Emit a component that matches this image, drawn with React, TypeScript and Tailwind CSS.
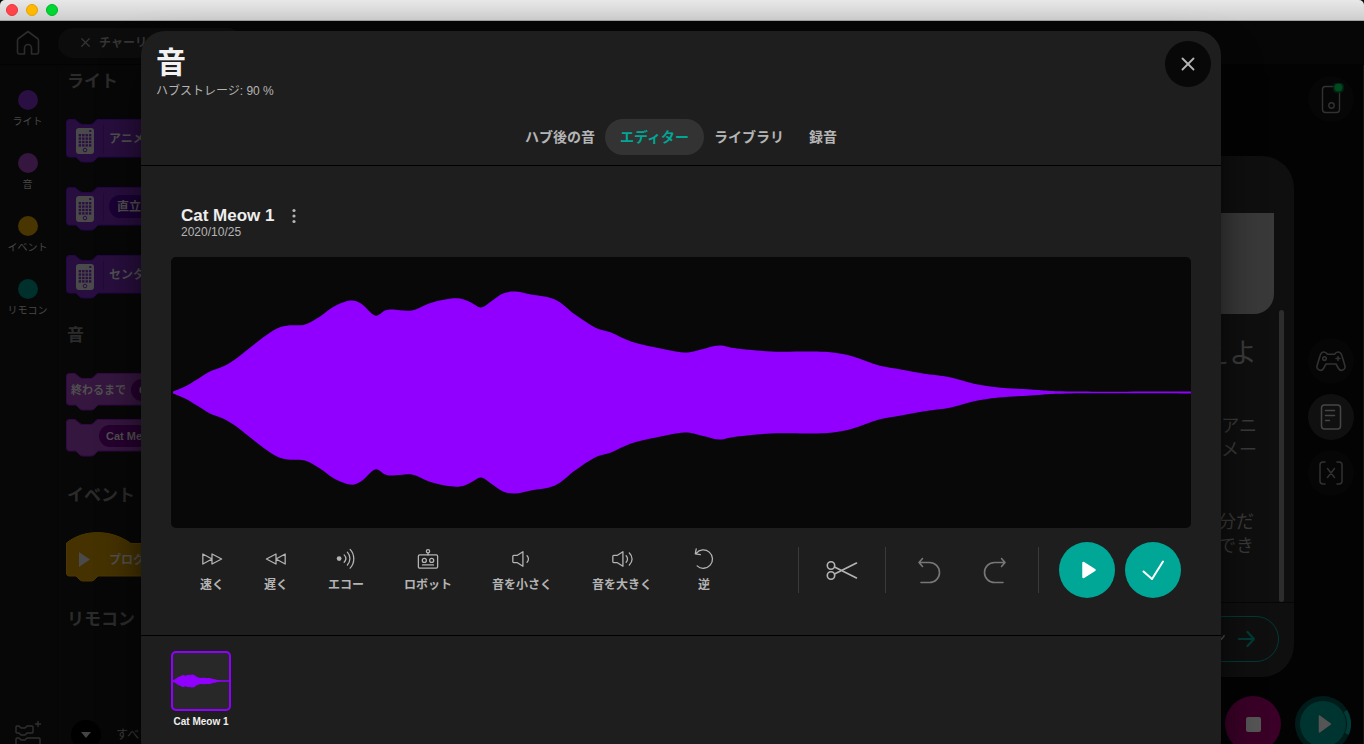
import type { ReactNode } from "react";
import { X } from "lucide-react";

const WAVE: [number, number][] = [
  [2, 1], [14, 6], [26, 13], [39, 21], [52, 26], [64, 33], [78, 44], [92, 55], [106, 64], [117, 67],
  [134, 68], [149, 76], [163, 86], [179, 92], [190, 89], [204, 77], [214, 82], [222, 83], [241, 82],
  [258, 89], [274, 93], [289, 94], [300, 90], [310, 85], [320, 91], [332, 99], [344, 101], [360, 98],
  [384, 93], [404, 78], [424, 65], [440, 60], [460, 51], [485, 45], [513, 40], [530, 43], [548, 47],
  [566, 44], [600, 41], [640, 41], [662, 40], [682, 36], [708, 27], [730, 23], [752, 19], [780, 15],
  [802, 9], [828, 5], [860, 3], [900, 1], [1020, 1],
];

function smooth(points: [number, number][]) {
  let d = "";
  for (let i = 0; i < points.length - 1; i++) {
    const a = points[Math.max(0, i - 1)];
    const b = points[i];
    const c = points[i + 1];
    const e = points[Math.min(points.length - 1, i + 2)];
    d += ` C${b[0] + (c[0] - a[0]) / 6} ${b[1] + (c[1] - a[1]) / 6} ${c[0] - (e[0] - b[0]) / 6} ${c[1] - (e[1] - b[1]) / 6} ${c[0]} ${c[1]}`;
  }
  return d;
}

const TOP = WAVE.map(([x, y]) => [x, 135.5 - y] as [number, number]);
const BOTTOM = WAVE.map(([x, y]) => [x, 135.5 + y] as [number, number]).reverse();
const WAVE_PATH = `M2 134.5${smooth(TOP)} L1020 136.5${smooth(BOTTOM)} Z`;

function Wave({ className, outline }: { className: string; outline?: boolean }) {
  return (
    <svg viewBox="0 0 1020 271" preserveAspectRatio="none" className={className} aria-hidden="true">
      <path d={WAVE_PATH} fill="#9100ff" stroke={outline ? "#9100ff" : "none"} strokeWidth="1.2" vectorEffect="non-scaling-stroke" />
    </svg>
  );
}

function Icon({ children, className, box = "0 0 24 24" }: { children: ReactNode; className: string; box?: string }) {
  return (
    <svg viewBox={box} fill="none" stroke="currentColor" strokeWidth="1.4" strokeLinecap="round" strokeLinejoin="round" className={className} aria-hidden="true">
      {children}
    </svg>
  );
}

const SPEAKER = <path d="M3 8h4l6-4v16l-6-4H3c-.6 0-1-.4-1-1v-6c0-.6.4-1 1-1Z" />;

const TOOLS: { label: string; icon: ReactNode }[] = [
  { label: "速く", icon: <path d="M2 6.500v11l10-5.500ZM12 6.500v11L22.500 12Z" /> },
  { label: "遅く", icon: <path d="M22 6.500v11L12 12ZM12 6.500v11L1.500 12Z" /> },
  {
    label: "エコー",
    icon: (
      <>
        <circle cx="4.500" cy="11.500" r="2.600" fill="currentColor" stroke="none" />
        <path d="M10 7.500c2.200 2.400 2.200 5.600 0 8M13.500 4.500c3.700 4 3.700 10 0 14M16.500 1.500c5.300 5.500 5.300 15 0 20.500" />
      </>
    ),
  },
  {
    label: "ロボット",
    icon: (
      <>
        <rect x="1.500" y="7.500" width="21" height="14.500" rx="1.500" />
        <circle cx="12" cy="3.500" r="1.800" />
        <path d="M12 5.500V7.500M6 18.500h12" />
        <circle cx="8" cy="13.500" r="2.200" />
        <circle cx="16" cy="13.500" r="2.200" />
      </>
    ),
  },
  { label: "音を小さく", icon: <>{SPEAKER}<path d="M17.500 8.500c2 2 2 5 0 7" /></> },
  { label: "音を大きく", icon: <>{SPEAKER}<path d="M16.500 8.500c2 2 2 5 0 7M20 5.500c4 3.600 4 9.400 0 13" /></> },
  { label: "逆", icon: <path d="M3.500 5.800A10 10 0 1 1 4.500 19.500M3.500 1l-1 5.500 5.500.8" /> },
];

const CATEGORIES = [
  { label: "ライト", color: "bg-[#2a0f42]" },
  { label: "音", color: "bg-[#35163f]" },
  { label: "イベント", color: "bg-[#493500]" },
  { label: "リモコン", color: "bg-[#00302c]" },
];

const NOTCH_TOP = "M.5 3Q.5.5 3 .5H9L14 4.500Q15 5.500 17 5.500H24Q26 5.500 27 4.500L31 .5H220";

function Block({ tall, fill, stroke, children }: { tall?: boolean; fill: string; stroke: string; children?: ReactNode }) {
  const h = tall ? 38 : 32;
  return (
    <div className="grid shrink-0">
      <svg width="220" height={h + 6} className="[grid-area:1/1]" aria-hidden="true">
        <path d={`${NOTCH_TOP}V${h}H32L28 ${h + 4}Q27 ${h + 5} 25 ${h + 5}H17Q15 ${h + 5} 14 ${h + 4}L10 ${h}H3Q.5 ${h} .5 ${h - 3}Z`} fill={fill} stroke={stroke} />
      </svg>
      <div className={tall ? "[grid-area:1/1] flex items-center h-[39px] pl-[10px] text-[12px] font-semibold text-[#505050]" : "[grid-area:1/1] flex items-center h-[34px] pl-[5px] text-[11px] font-semibold text-[#505050]"}>
        {children}
      </div>
    </div>
  );
}

function HubIcon() {
  return (
    <svg width="18" height="27" viewBox="0 0 18 27" className="mt-[5px] shrink-0" aria-hidden="true">
      <rect x="0" y="0" width="18" height="26" rx="3" fill="#4a4a4a" />
      <rect x="13" y="2" width="2.500" height="2" rx="1" fill="#2a0f42" />
      {[0, 1, 2, 3].map((c) =>
        [0, 1, 2, 3].map((r) => <rect key={`${c}${r}`} x={2.700 + c * 3.400} y={6 + r * 3.400} width="2.400" height="2.400" fill="#2a0f42" />)
      )}
      <circle cx="9" cy="22" r="1.800" fill="none" stroke="#2a0f42" />
    </svg>
  );
}

function Heading({ children, className }: { children: ReactNode; className: string }) {
  return <h2 className={`shrink-0 pl-[1px] text-[17px] leading-5 font-bold text-[#2b2b2b] ${className}`}>{children}</h2>;
}

function Workspace() {
  return (
    <div className="flex h-full flex-col bg-[#030303]">
      <header className="flex h-11 shrink-0 items-center border-b border-[#030303] bg-[#060606]">
        <button aria-label="ホーム" className="flex w-14 justify-center text-[#2c2c2c]">
          <Icon box="0 0 24 26" className="h-[26px] w-6">
            <path strokeWidth="1.600" d="M12 1.500 2.500 8.500Q1.500 9.200 1.500 10.500V22q0 2 2 2h5v-6a3.500 3.500 0 0 1 7 0v6h5q2 0 2-2V10.500q0-1.300-1-2Z" />
          </Icon>
        </button>
        <button className="ml-[2px] flex h-[30px] w-[184px] items-center gap-[6px] rounded-full bg-[#0c0c0c] pl-5 text-[12px] font-semibold text-[#353535]">
          <X size={15} strokeWidth={2} aria-hidden="true" />
          チャーリ
        </button>
      </header>

      <div className="flex min-h-0 flex-1">
        <nav className="flex w-[57px] shrink-0 flex-col justify-between bg-[#070707] pr-[2px]">
          <ul className="flex flex-col gap-6 pt-[25px]">
            {CATEGORIES.map((c) => (
              <li key={c.label}>
                <button className="flex w-full flex-col items-center gap-[5px] text-[10px] leading-[14px] whitespace-nowrap text-[#484848]">
                  <span className={`size-5 rounded-full ${c.color}`} />
                  {c.label}
                </button>
              </li>
            ))}
          </ul>
          <button aria-label="拡張を追加" className="-mb-2 flex justify-center text-[#303030]">
            <Icon box="0 0 28 32" className="h-8 w-7">
              <path strokeWidth="1.400" d="M3 6h2l2 2h4l2-2h5q1 0 1 1v5q0 1-1 1h-5l-2 2H7l-2-2H3q-1 0-1-1V7q0-1 1-1ZM3 18h2l2 2h4l2-2h12q1 0 1 1v7H2v-7q0-1 1-1ZM24 1.500v5M21.500 4h5" />
            </Icon>
          </button>
        </nav>

        <section className="flex w-[260px] shrink-0 flex-col overflow-hidden border-l border-[#050505] bg-[#070707] pl-2">
          <Heading className="mt-[7px]">ライト</Heading>
          <div className="mt-[27px] flex flex-col gap-6">
            <Block tall fill="#280e3e" stroke="#22064a">
              <HubIcon /><span className="mr-[5px] ml-[9px] h-7 w-px bg-[#220a36]" />アニメ
            </Block>
            <Block tall fill="#280e3e" stroke="#22064a">
              <HubIcon /><span className="mr-[5px] ml-[9px] h-7 w-px bg-[#220a36]" />
              <span className="flex h-[23px] items-center rounded-full bg-[#1b0036] px-2">直立</span>
            </Block>
            <Block tall fill="#280e3e" stroke="#22064a">
              <HubIcon /><span className="mr-[5px] ml-[9px] h-7 w-px bg-[#220a36]" />センタ
            </Block>
          </div>
          <Heading className="mt-[27px]">音</Heading>
          <div className="mt-[27px] flex flex-col gap-2">
            <Block fill="#35163f" stroke="#340746">
              終わるまで
              <span className="ml-[5px] flex h-[22px] items-center rounded-full bg-[#26002f] px-2">C</span>
            </Block>
            <Block fill="#35163f" stroke="#340746">
              <span className="ml-7 flex h-[22px] items-center rounded-full bg-[#26002f] px-[7px] font-bold">Cat Me</span>
            </Block>
          </div>
          <Heading className="mt-[29px]">イベント</Heading>
          <div className="mt-[26px] grid shrink-0">
            <svg width="220" height="50" className="[grid-area:1/1]" aria-hidden="true">
              <path d="M.5 11C18-3 45-3 65 11.500H220V44H32L28 48Q27 49 25 49H17Q15 49 14 48L10 44H3Q.5 44 .5 41Z" fill="#453200" stroke="#4d3700" />
              <path d="M13 20v15l11-7.500Z" fill="#4a4a4a" />
            </svg>
            <div className="[grid-area:1/1] flex h-[50px] items-center pt-[6px] pl-[43px] text-[12px] font-semibold text-[#505050]">プログ</div>
          </div>
          <Heading className="mt-[28px]">リモコン</Heading>
          <div className="mt-auto -mb-[6px] flex items-center gap-[15px] pl-[5px] text-[12px] text-[#3c3c3c]">
            <button aria-label="開く" className="flex size-[30px] items-center justify-center rounded-full bg-black">
              <svg width="12" height="6" aria-hidden="true"><path d="M1 0h10L6 6Z" fill="#444" /></svg>
            </button>
            すべ
          </div>
        </section>

        <main className="flex min-w-0 flex-1 flex-col justify-between border-r border-[#151515]">
          <div className="flex justify-end gap-[14px] pr-[9px]">
            <article className="mt-[91px] flex h-[521px] w-[340px] flex-col rounded-[32px] bg-[#0f0f0f] pt-[57px] text-right">
              <div className="mr-5 h-[101px] shrink-0 rounded-br-[20px] bg-[#393939]" />
              <div className="-mt-1 flex h-[293px] shrink-0 border-b border-[#060606] text-[18px] leading-6 text-[#3a3a3a]">
                <div className="mr-[22px] flex-1">
                  <h2 className="mt-6 text-[28px] leading-10">えよ</h2>
                  <p className="mt-10">アニ<br />メー</p>
                  <p className="mt-12 pr-[3px]">分だ<br />でき</p>
                </div>
                <div className="mr-[10px] w-[5px] rounded-full bg-[#2d2d2d]" />
              </div>
              <button className="mt-[13px] mr-[15px] ml-6 flex h-[46px] items-center justify-end gap-3 rounded-full border border-[#003b36] pr-[22px] text-[16px] text-[#555]">
                ン
                <Icon className="h-5 w-[18px] text-[#003b36]" box="0 0 18 20"><path strokeWidth="2.200" d="M1 10h15M9.500 3 16 10l-6.500 7" /></Icon>
              </button>
            </article>
            <aside className="flex flex-col items-center gap-[10px] pt-[11px] text-[#323232]">
              <button aria-label="ハブ接続" className="mb-[206px] flex size-[46px] items-center justify-center rounded-full bg-[#060606]">
                <Icon box="0 0 26 32" className="h-8 w-[26px]">
                  <rect x="4.500" y="3.500" width="17" height="26" rx="3" strokeWidth="1.400" />
                  <circle cx="13.500" cy="22.500" r="2.700" strokeWidth="1.400" />
                  <circle cx="17.500" cy="7.500" r="1.200" strokeWidth="1" />
                  <circle cx="20.500" cy="4.500" r="6" fill="#00240f" fillOpacity=".8" stroke="none" />
                  <circle cx="20.500" cy="4.500" r="4" fill="#004a22" stroke="none" />
                </Icon>
              </button>
              <button aria-label="コントローラー" className="flex size-[46px] items-center justify-center rounded-full bg-[#060606]">
                <Icon box="0 0 30 22" className="h-[22px] w-[30px]">
                  <path strokeWidth="1.600" d="M8 2C5 2 4.500 4 4 6L1 16c-.8 4 4.500 6 6.500 2.500L10 14h10l2.500 4.500C24.500 22 29.800 20 29 16L26 6c-.5-2-1-4-4-4-1.500 0-2.500.7-3.500 2.200h-7C10.500 2.700 9.500 2 8 2Z" />
                  <circle cx="8.500" cy="8.500" r="1.800" strokeWidth="1.500" /><path strokeWidth="1.500" d="M22 6.500v4M20 8.500h4" />
                </Icon>
              </button>
              <button aria-label="レッスン" className="flex size-[46px] items-center justify-center rounded-full bg-[#101010] text-[#454545]">
                <Icon box="0 0 22 26" className="h-[26px] w-[22px]">
                  <rect x="1.500" y="1" width="19" height="24" rx="3" strokeWidth="1.500" />
                  <path strokeWidth="1.500" d="M5.500 6.500h9M5.500 11.500h9M5.500 16.500h4" />
                </Icon>
              </button>
              <button aria-label="変数" className="flex size-[46px] items-center justify-center rounded-full bg-[#060606]">
                <Icon box="0 0 24 24" className="size-6">
                  <path strokeWidth="1.500" d="M6 1H4Q1 1 1 4v16q0 3 3 3h2M18 1h2q3 0 3 3v16q0 3-3 3h-2M8.500 7.500l7 9M15.500 7.500l-7 9" />
                </Icon>
              </button>
            </aside>
          </div>
          <div className="-mb-2 flex shrink-0 justify-end gap-[14px] pr-3">
            <button aria-label="停止" className="flex size-14 items-center justify-center rounded-full bg-[#3a0027]">
              <span className="size-[15px] rounded-[2px] bg-[#555]" />
            </button>
            <button aria-label="実行" className="rounded-full">
              <svg width="56" height="56" aria-hidden="true">
                <circle cx="28" cy="28" r="28" fill="#001c1a" />
                <circle cx="28" cy="28" r="23" fill="#003430" />
                <path d="M50.500 15A26 26 0 0 1 52 38" fill="none" stroke="#003b36" strokeWidth="4" />
                <path d="M24.500 20v16l11-8Z" fill="#555" stroke="#555" strokeWidth="1.500" strokeLinejoin="round" />
              </svg>
            </button>
          </div>
        </main>
      </div>
    </div>
  );
}

const TABS = ["ハブ後の音", "エディター", "ライブラリ", "録音"];

function SoundDialog() {
  return (
    <div role="dialog" aria-label="音" className="absolute top-[10px] right-[2px] -bottom-5 left-0 mx-auto flex max-w-[1080px] flex-col rounded-[24px] bg-[#1e1e1e] shadow-2xl shadow-black">
      <header className="border-b border-black pb-[10px]">
        <div className="flex h-[88px] justify-between pt-[10px] pr-[10px] pl-[15px]">
          <div>
            <h1 className="text-[30px] leading-[43px] font-bold text-[#f2f2f2]">音</h1>
            <p className="text-[12px] leading-[15px] text-[#b4b4b4]">ハブストレージ: 90 %</p>
          </div>
          <button aria-label="閉じる" className="flex size-[46px] items-center justify-center rounded-full bg-[#080808] text-[#b4b4b4]">
            <X size={22} strokeWidth={2} aria-hidden="true" />
          </button>
        </div>
        <nav className="flex justify-center -space-x-[5px]">
          {TABS.map((t) => (
            <button key={t} className={t === "エディター" ? "h-9 rounded-full bg-[#333] px-[15px] text-[14px] font-bold text-[#00a696]" : "h-9 px-[15px] text-[14px] font-bold text-[#b4b4b4]"}>
              {t}
            </button>
          ))}
        </nav>
      </header>

      <section className="border-b border-black px-[30px] pt-10 pb-[37px]">
        <div className="px-[10px] pb-[18px]">
          <div className="flex items-center gap-4">
            <h2 className="text-[17px] leading-5 font-bold text-[#eee]">Cat Meow 1</h2>
            <button aria-label="メニュー" className="text-[#b4b4b4]">
              <svg width="6" height="16" fill="currentColor" aria-hidden="true"><circle cx="3" cy="2.500" r="1.600" /><circle cx="3" cy="8" r="1.600" /><circle cx="3" cy="13.500" r="1.600" /></svg>
            </button>
          </div>
          <p className="text-[12px] leading-[13px] text-[#b4b4b4]">2020/10/25</p>
        </div>
        <div className="h-[271px] overflow-hidden rounded-[5px] bg-[#080808]">
          <Wave className="size-full" />
        </div>
        <div className="flex items-center justify-between pt-[14px] pr-[10px] pl-[29px]">
          <div className="flex gap-10">
            {TOOLS.map((t) => (
              <button key={t.label} className="flex min-w-6 flex-col items-center gap-[7px] text-[12px] leading-4 font-bold whitespace-nowrap text-[#b4b4b4]">
                <Icon className="size-[22px]">{t.icon}</Icon>
                {t.label}
              </button>
            ))}
          </div>
          <div className="flex items-center text-[#b4b4b4]">
            <div className="flex h-[46px] w-[88px] items-center justify-center border-x border-[#3a3a3a]">
              <button aria-label="切り取り">
                <Icon box="0 0 32 22" className="h-[22px] w-8">
                  <circle cx="5" cy="6.500" r="3.700" strokeWidth="1.600" /><circle cx="5" cy="16.500" r="3.700" strokeWidth="1.600" />
                  <path strokeWidth="1.600" d="M8.500 8 30.500 19M8.500 15 30.500 4" />
                </Icon>
              </button>
            </div>
            <div className="mr-5 flex h-[46px] w-[153px] items-center justify-center gap-[42px] border-r border-[#3a3a3a] text-[#777]">
              <button aria-label="元に戻す">
                <Icon box="0 0 24 28" className="h-7 w-6"><path strokeWidth="1.600" d="M4 26.500h8.500a10 10 0 0 0 0-20H2M5.500 2.500 2 6.500l3.500 4" /></Icon>
              </button>
              <button aria-label="やり直す">
                <Icon box="0 0 24 28" className="h-7 w-6"><path strokeWidth="1.600" d="M20 26.500h-8.500a10 10 0 0 1 0-20H22M18.500 2.500l3.500 4-3.500 4" /></Icon>
              </button>
            </div>
            <div className="flex gap-[10px]">
              <button aria-label="再生" className="flex size-14 items-center justify-center rounded-full bg-[#00a696]">
                <svg width="14" height="18" className="ml-1" aria-hidden="true"><path d="M1.500 2v14L12.500 9Z" fill="#fff" stroke="#fff" strokeWidth="2.500" strokeLinejoin="round" /></svg>
              </button>
              <button aria-label="完了" className="flex size-14 items-center justify-center rounded-full bg-[#00a696] text-white">
                <Icon box="0 0 22 20" className="h-5 w-[22px]"><path strokeWidth="2" d="M1.500 11.500 10 19 21 1.500" /></Icon>
              </button>
            </div>
          </div>
        </div>
      </section>

      <section className="px-[30px] pt-[15px]">
        <button className="flex w-[60px] flex-col items-center gap-1 text-[10px] leading-[14px] font-bold whitespace-nowrap text-[#eee]">
          <span className="flex size-[60px] items-center rounded-[5px] border-2 border-[#9100ff] bg-[#282828]">
            <Wave outline className="h-4 w-full" />
          </span>
          Cat Meow 1
        </button>
      </section>
    </div>
  );
}

export default function App() {
  return (
    <div lang="ja" className="flex h-screen flex-col overflow-hidden bg-[#060606] font-['Liberation_Sans','Noto_Sans_CJK_JP',sans-serif]">
      <div className="flex h-[21px] shrink-0 items-center gap-2 rounded-t-[5px] border-b border-[#a0a0a0] bg-linear-to-b from-[#e8e8e8] to-[#cecece] pl-[6px]">
        <button aria-label="ウィンドウを閉じる" className="size-3 rounded-full border border-[#e8383c] bg-[#ff454a]" />
        <button aria-label="最小化" className="size-3 rounded-full border border-[#e6a200] bg-[#ffb900]" />
        <button aria-label="最大化" className="size-3 rounded-full border border-[#00b428] bg-[#00d831]" />
      </div>
      <div className="relative min-h-0 flex-1">
        <Workspace />
        <SoundDialog />
      </div>
    </div>
  );
}
